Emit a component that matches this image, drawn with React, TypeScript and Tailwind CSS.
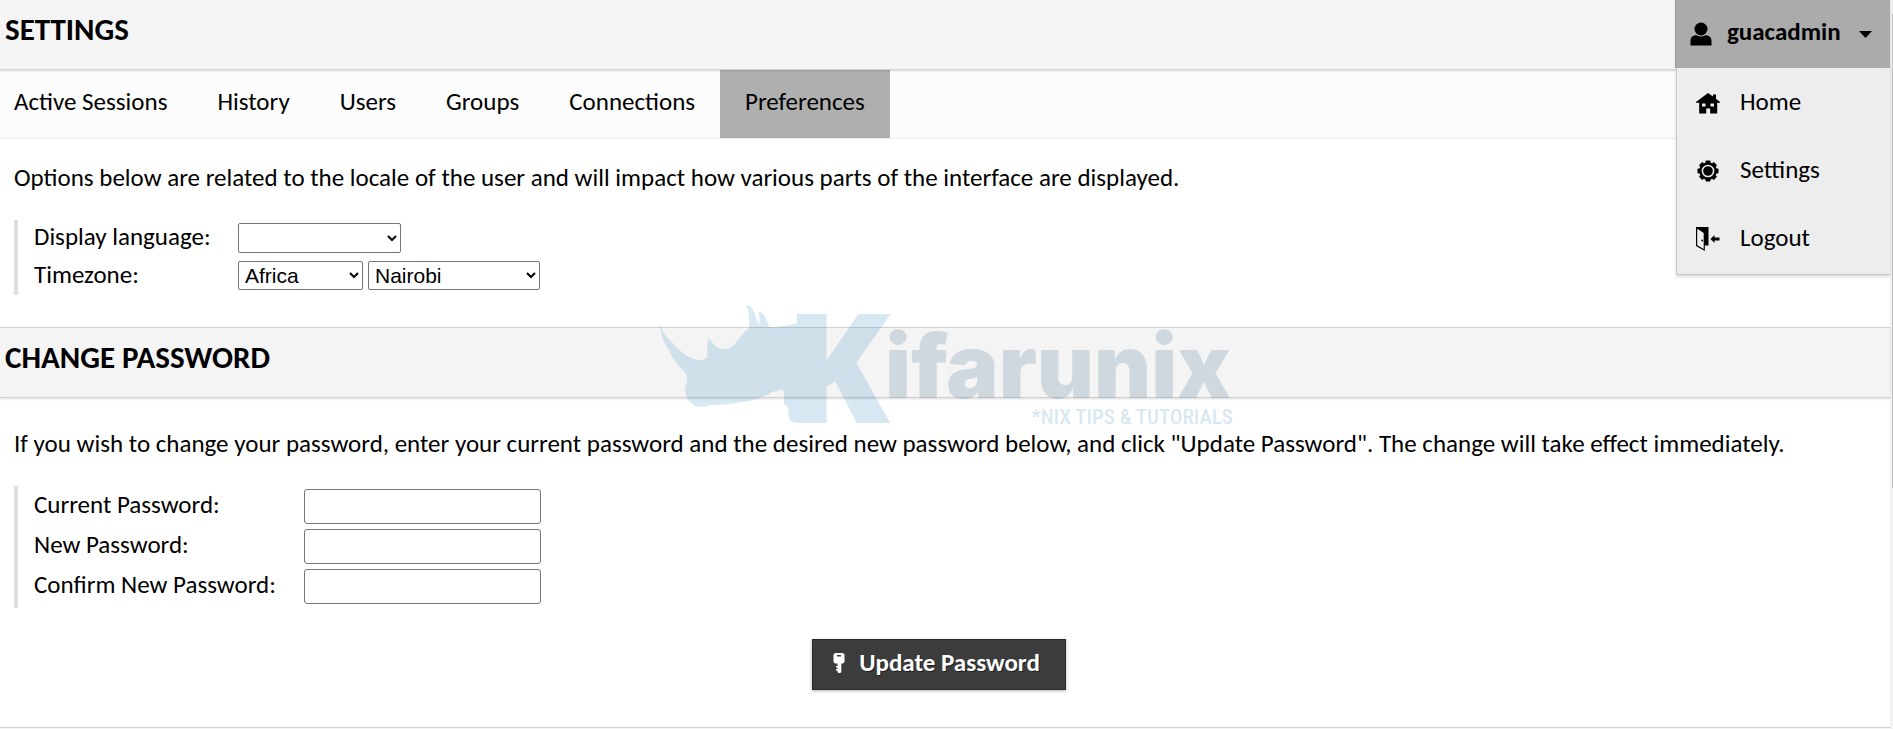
import { useState } from "react";

const TABS = ["Active Sessions", "History", "Users", "Groups", "Connections", "Preferences"];

const PASSWORD_FIELDS = [
  { id: "current-password", label: "Current Password:" },
  { id: "new-password", label: "New Password:" },
  { id: "confirm-password", label: "Confirm New Password:" },
];

function UserIcon() {
  return (
    <svg viewBox="0 0 24 24" className="h-6 w-6" aria-hidden="true">
      <circle cx="12" cy="7" r="6.5" />
      <path d="M1.500 23.500v-4.500c0-4.500 3-5.500 6-5.700 3 1.600 6 1.600 9 0 3 .2 6 1.200 6 5.700v4.500z" />
    </svg>
  );
}

function HomeIcon() {
  return (
    <svg viewBox="0 0 24 24" className="h-6 w-6" aria-hidden="true">
      <path
        fillRule="evenodd"
        d="M12 2 17 5.500V3.500h3v4.200L24 11v.8h-2.800V22.500h-7V17.500h-4v5h-7V11.800H0V11zM6 12.500v3h3.500v-3zM14.500 12.500v3H18v-3z"
      />
    </svg>
  );
}

function GearIcon() {
  return (
    <svg viewBox="0 0 24 24" className="h-6 w-6" aria-hidden="true">
      {[0, 45, 90, 135].map((angle) => (
        <rect key={angle} x="9.500" y="1.500" width="5" height="21" rx="1" transform={`rotate(${angle} 12 12)`} />
      ))}
      <circle cx="12" cy="12" r="8.800" />
      <circle cx="12" cy="12" r="5.600" fill="none" stroke="#ededed" strokeWidth="1.500" />
    </svg>
  );
}

function LogoutIcon() {
  return (
    <svg viewBox="0 0 24 24" className="h-6 w-6" aria-hidden="true">
      <path fillRule="evenodd" d="M0 0h12.500v18.500H8.800V24L0 19zM1.200 1.800v16.500l6.500 3.700V6z" />
      <circle cx="6.200" cy="13.500" r="0.900" />
      <path d="m14.500 12 4-4v2.500h5v3h-5V16z" />
    </svg>
  );
}

function KeyIcon() {
  return (
    <svg viewBox="0 0 12 20" className="h-5 w-3" fill="#fff" aria-hidden="true">
      <path
        fillRule="evenodd"
        d="M2 0h8l1.500 1.500v7.500L10 10.500H8.300V19l-1 1H5.500l-1-1v-1.500H3v-1.500h1.500v-1.500H3V13h1.500v-2.500H2L.5 9V1.500zM4 2v1.500h4V2z"
      />
    </svg>
  );
}

const MENU_ITEMS = [
  { label: "Home", Icon: HomeIcon },
  { label: "Settings", Icon: GearIcon },
  { label: "Logout", Icon: LogoutIcon },
];

function UserMenu() {
  const [open, setOpen] = useState(true);

  return (
    <div className="relative w-[215px]">
      <button
        type="button"
        aria-expanded={open}
        onClick={() => setOpen(!open)}
        className="flex h-[68px] w-full items-center border-l border-[#999] bg-[#ababab] pr-[18px] pl-[13px]"
      >
        <UserIcon />
        <span className="ml-3.5 flex-1 pb-1 text-left font-bold">guacadmin</span>
        <svg viewBox="0 0 13 7" className="h-[7px] w-[13px]" aria-hidden="true">
          <path d="M0 0h13L6.500 7z" />
        </svg>
      </button>
      {open && (
        <ul className="absolute top-[68px] right-0 left-px z-20 border-b border-l border-[#c8c8c8] bg-[#ededed] pb-0.5 shadow-[0_2px_3px_rgba(0,0,0,0.15)]">
          {MENU_ITEMS.map(({ label, Icon }) => (
            <li key={label}>
              <a href="#" className="flex h-[68px] items-center gap-5 pt-px pl-[19px]">
                <Icon />
                <span className="pb-0.5">{label}</span>
              </a>
            </li>
          ))}
        </ul>
      )}
    </div>
  );
}

function Watermark() {
  return (
    <svg
      viewBox="0 0 580 130"
      className="pointer-events-none absolute top-[300px] left-[655px] z-10 h-[130px] w-[580px] overflow-visible"
      role="img"
      aria-label="Kifarunix *NIX Tips & Tutorials"
    >
      <g fill="#4191c3" opacity="0.2">
        <path d="M5 24C8 32 10 36 15 40 22 49 29 55 37 58c4 2 7 2 10 2 3-1 5-2 5-3 1-6-1-13 2-19 2 4 5 7 8 9 3 2 5 2 8 2 4 0 7-2 10-5 4-6 8-11 14-16 0-8 1-16-3-22 2-1 4 0 6 2 3 5 4 11 7 17 1-4 0-9 0-13 3 0 5 2 6 5 2 3 3 7 4 10 5 0 10 0 14-1 13-1 25-6 34-9v105h-24c-2 0-4-2-4-5-1-3 0-6-1-9-1-3-4-3-4-6V91c-1-1-2-2-4-1-4 1-9 2-13 5-8 3-15 6-24 7-11 2-22 3-33 3-3 1-6 2-10 2-4 0-7-3-10-5-4-4-5-8-5-12 0-4 3-8 2-13 0-3-2-5-4-7C23 65 18 60 15 52 9 43 5 34 5 24z" />
        <text x="130" y="123" fontSize="153" fontWeight="800" fontFamily="Open Sans, sans-serif">K</text>
        <text x="578" y="124" textAnchor="end" fontSize="21" fontWeight="500" fontFamily="Roboto Condensed, Liberation Sans Narrow, sans-serif">
          *NIX TIPS &amp; TUTORIALS
        </text>
      </g>
      <text x="230" y="98" fontSize="88" fontWeight="900" fontFamily="Inter, sans-serif" fill="#416e8c" opacity="0.2">
        ifarunix
      </text>
    </svg>
  );
}

export default function App() {
  return (
    <div className="flex h-screen overflow-hidden bg-white font-['Carlito','Lato',sans-serif] text-[25px] leading-7 text-black">
      <div className="relative min-w-0 flex-1">
        <header className="relative flex h-[70px] justify-between border-b border-[#d0d0d0] bg-[#f4f4f4] shadow-[0_1px_2px_rgba(0,0,0,0.15)]">
          <h1 className="px-[5px] py-[11px] text-[31px] leading-9 font-bold">SETTINGS</h1>
          <UserMenu />
        </header>

        <nav className="flex h-[69px] border-b border-[#ececec] bg-[#fcfcfc]">
          {TABS.map((tab) => (
            <a
              key={tab}
              href="#"
              className={`flex items-center px-[25px] pb-1 first:pl-3.5 ${tab === "Preferences" ? "bg-[#afafaf]" : ""}`}
            >
              {tab}
            </a>
          ))}
        </nav>

        <section className="px-3.5 pt-[25px] pb-8">
          <p>Options below are related to the locale of the user and will impact how various parts of the interface are displayed.</p>
          <div className="mt-7 border-l-4 border-[#e0e0e0] pl-4">
            <div className="flex h-9 items-center">
              <label htmlFor="language" className="w-[204px] pb-0.5">Display language:</label>
              <select id="language" className="h-[30px] w-[163px] rounded-[2px] border border-[#767676] bg-white" />
            </div>
            <div className="flex h-[39px] items-center">
              <label htmlFor="region" className="w-[204px] pb-0.5">Timezone:</label>
              <select id="region" className="h-[29px] w-[125px] rounded-[2px] border border-[#767676] bg-white pl-0.5 font-['Liberation_Sans',sans-serif] text-[21px] leading-6">
                <option>Africa</option>
              </select>
              <select aria-label="City" className="ml-[5px] h-[29px] w-[172px] rounded-[2px] border border-[#767676] bg-white pl-0.5 font-['Liberation_Sans',sans-serif] text-[21px] leading-6">
                <option>Nairobi</option>
              </select>
            </div>
          </div>
        </section>

        <div className="h-[71px] border-y border-[#d0d0d0] bg-[#f4f4f4] px-[5px] py-[11px] shadow-[0_1px_2px_rgba(0,0,0,0.15)]">
          <h2 className="text-[31px] leading-9 font-bold">CHANGE PASSWORD</h2>
        </div>

        <form className="px-3.5 pt-8" onSubmit={(e) => e.preventDefault()}>
          <p>
            If you wish to change your password, enter your current password and the desired new password below, and click "Update Password". The change will take effect immediately.
          </p>
          <div className="mt-7 border-l-4 border-[#e0e0e0] pb-0.5 pl-4">
            {PASSWORD_FIELDS.map(({ id, label }) => (
              <div key={id} className="flex h-10 items-center">
                <label htmlFor={id} className="w-[270px] pb-0.5">{label}</label>
                <input id={id} type="password" className="h-[35px] w-[237px] rounded-[3px] border border-[#767676] bg-white px-1" />
              </div>
            ))}
          </div>
          <div className="mt-[31px] flex justify-center pr-3">
            <button
              type="submit"
              className="flex h-[51px] items-center gap-3.5 border border-[#2a2a2a] bg-[#3c3c3c] pr-[25px] pb-1 pl-5 font-bold text-white shadow-[0_1px_3px_rgba(0,0,0,0.3)] [text-shadow:1px_1px_0_rgba(0,0,0,0.5)]"
            >
              <KeyIcon />
              Update Password
            </button>
          </div>
        </form>

        <div className="mt-[37px] h-4 border-t border-[#d0d0d0] bg-[#f4f4f4]" />
        <Watermark />
      </div>

      {/* scroll track */}
      <div className="w-[3px] bg-[#f1f1f1] pt-3.5 pl-0.5">
        <div className="h-[474px] bg-[#c1c1c1]" />
      </div>
    </div>
  );
}
